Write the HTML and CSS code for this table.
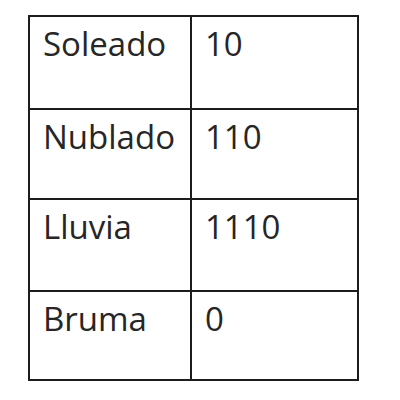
FILE: index.html
```html
<!DOCTYPE html>
<html>
<head>
<meta charset="utf-8">
<link rel="stylesheet" href="styles.css">
</head>
<body>
<div class="grid">
  <div class="cell">Soleado</div><div class="cell">10</div>
  <div class="cell">Nublado</div><div class="cell">110</div>
  <div class="cell">Lluvia</div><div class="cell">1110</div>
  <div class="cell">Bruma</div><div class="cell">0</div>
</div>
</body>
</html>
```
FILE: styles.css
```css
html, body {
  margin: 0;
  background: #ffffff;
}
body {
  padding: 15px 0 0 28px;
}
.grid {
  display: grid;
  width: 327px;
  grid-template-columns: 160px 165px;
  grid-template-rows: 91px 88px 90px 87px;
  gap: 2px;
  padding: 2px;
  background: #1c1c1c;
}
.cell {
  background: #ffffff;
  font-family: "Open Sans", sans-serif;
  font-size: 33px;
  line-height: 45px;
  color: #262626;
  padding: 4px 0 0 13px;
}
```
